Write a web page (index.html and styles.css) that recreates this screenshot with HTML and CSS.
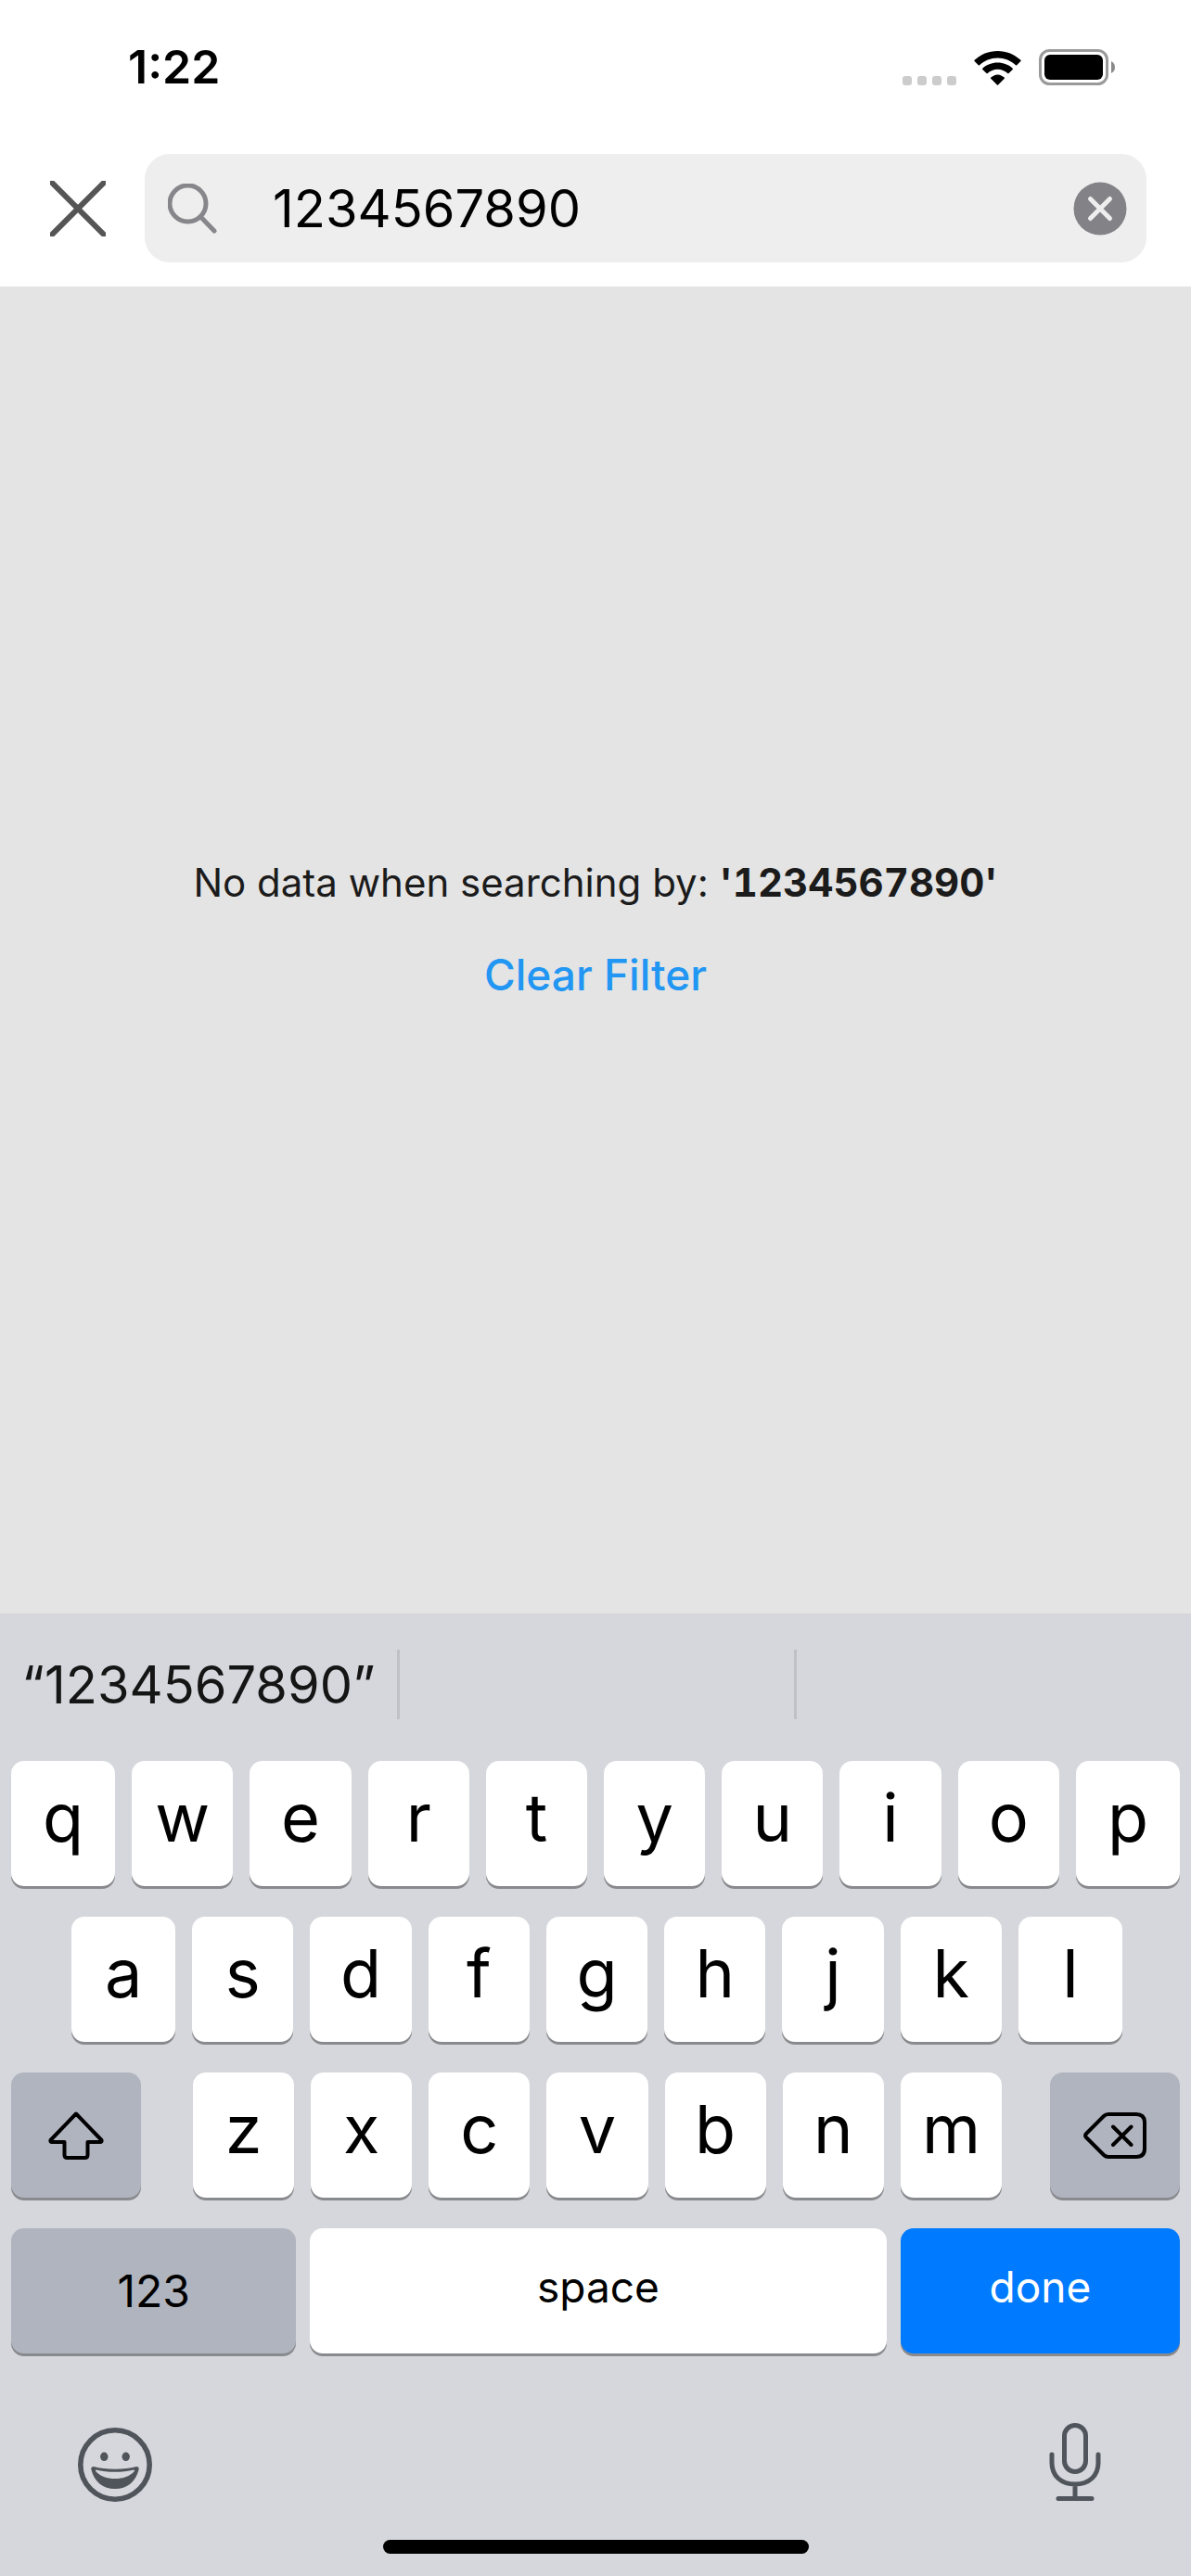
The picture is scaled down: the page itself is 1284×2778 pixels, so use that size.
FILE: index.html
```html
<!DOCTYPE html>
<html lang="en">
<head>
<meta charset="utf-8">
<meta name="viewport" content="width=device-width, initial-scale=1">
<title>Search</title>
<link rel="stylesheet" href="styles.css">
</head>
<body>
<div class="screen">
  <header class="header">
    <div class="status">
      <span class="clock">1:22</span>
      <div class="indicators">
        <svg width="58" height="10" viewBox="0 0 58 10" fill="#ccc" aria-hidden="true"><rect width="10" height="10" rx="3"/><rect x="16" width="10" height="10" rx="3"/><rect x="32" width="10" height="10" rx="3"/><rect x="48" width="10" height="10" rx="3"/></svg>
        <svg width="51" height="37" viewBox="0 0 51 37" aria-hidden="true"><path d="M25.500 7.500C33 7.500 39.800 10.400 45 15.200Q45.600 15.700 46.200 15.200L50.400 11Q51 10.400 50.400 9.800C43.800 3.700 35 0 25.500 0S7.200 3.700.6 9.800Q0 10.400.6 11L4.800 15.200Q5.400 15.700 6 15.200C11.200 10.400 18 7.500 25.500 7.500ZM25.500 19.800C29.700 19.800 33.400 21.400 36.300 24.100Q36.900 24.600 37.500 24.100L41.700 19.900Q42.300 19.300 41.700 18.700C37.400 14.800 31.700 12.500 25.500 12.500S13.600 14.800 9.300 18.700Q8.700 19.300 9.300 19.900L13.500 24.100Q14.100 24.600 14.700 24.100C17.600 21.400 21.300 19.800 25.500 19.800ZM32.800 29.800Q33.400 29.200 32.700 28.600C30.700 26.900 28.200 25.500 25.500 25.500S20.300 26.900 18.300 28.600Q17.600 29.200 18.200 29.800L24.900 36.500Q25.500 37.100 26.100 36.500Z"/></svg>
        <svg width="82" height="39" viewBox="0 0 82 39" aria-hidden="true"><rect x="1.500" y="1.500" width="72" height="36" rx="10" fill="none" stroke="#9a9a9a" stroke-width="3"/><rect x="6" y="6" width="63" height="27" rx="6"/><path d="M78 13Q82 15 82 19.500T78 26Z" fill="#8a8a8a"/></svg>
      </div>
    </div>
    <form class="search-row">
      <button class="icon-button" type="button" aria-label="Close">
        <svg width="60" height="60" viewBox="0 0 60 60" stroke="#555" stroke-width="6" aria-hidden="true"><path d="M0 0 60 60M60 0 0 60"/></svg>
      </button>
      <div class="search-box">
        <svg width="53" height="54" viewBox="0 0 53 54" fill="none" stroke="#87878b" stroke-width="5" stroke-linecap="round" aria-hidden="true"><circle cx="21.500" cy="21.500" r="19.500"/><path d="M36 36.500 50 51"/></svg>
        <input class="search-input" type="text" value="1234567890" aria-label="Search">
        <button class="icon-button" type="button" aria-label="Clear text">
          <svg width="58" height="58" viewBox="0 0 58 58" aria-hidden="true"><circle cx="29" cy="29" r="28.500" fill="#838287"/><path d="M18.500 18.500 39.500 39.500M39.500 18.500 18.500 39.500" stroke="#eee" stroke-width="5" stroke-linecap="round"/></svg>
        </button>
      </div>
    </form>
  </header>

  <main class="empty">
    <p class="empty-text">No data when searching by: <strong>'1234567890'</strong></p>
    <button class="clear-filter" type="button">Clear Filter</button>
  </main>

  <section class="keyboard" aria-label="Keyboard">
    <div class="suggestions">
      <button class="suggestion" type="button">“1234567890”</button>
      <button class="suggestion" type="button" aria-label="Suggestion 2"></button>
      <button class="suggestion" type="button" aria-label="Suggestion 3"></button>
    </div>
    <div class="keys">
      <div class="row">
        <button class="key edge">q</button><button class="key">w</button><button class="key">e</button><button class="key">r</button><button class="key">t</button><button class="key">y</button><button class="key">u</button><button class="key">i</button><button class="key">o</button><button class="key edge">p</button>
      </div>
      <div class="row row-inset">
        <button class="key edge">a</button><button class="key">s</button><button class="key">d</button><button class="key">f</button><button class="key">g</button><button class="key">h</button><button class="key">j</button><button class="key">k</button><button class="key edge">l</button>
      </div>
      <div class="row row-split">
        <button class="key modifier side" aria-label="Shift">
          <svg width="60" height="54" viewBox="0 0 60 54" fill="none" stroke="#000" stroke-width="4" stroke-linejoin="round" aria-hidden="true"><path d="M30 3.500 57.500 32Q58 34 56 34H42.500V48Q42.500 51 39.500 51H20.500Q17.500 51 17.500 48V34H4Q2 34 2.500 32Z"/></svg>
        </button>
        <div class="row letters">
          <button class="key">z</button><button class="key">x</button><button class="key">c</button><button class="key">v</button><button class="key">b</button><button class="key">n</button><button class="key">m</button>
        </div>
        <button class="key modifier side" aria-label="Delete">
          <svg width="68" height="50" viewBox="0 0 68 50" fill="none" stroke="#000" stroke-width="4" stroke-linejoin="round" stroke-linecap="round" aria-hidden="true"><path d="M27 2H57Q66 2 66 11V39Q66 48 57 48H27Q24 48 22 46L3 27Q1 25 3 23L22 4Q24 2 27 2ZM32 15.500 51.500 35M51.500 15.500 32 35"/></svg>
        </button>
      </div>
      <div class="row row-bottom">
        <button class="key modifier numbers">123</button>
        <button class="key word space">space</button>
        <button class="key word done">done</button>
      </div>
    </div>
    <div class="dock">
      <button class="icon-button" type="button" aria-label="Emoji">
        <svg width="80" height="80" viewBox="0 0 80 80" aria-hidden="true"><circle cx="40" cy="40" r="37.200" fill="none" stroke="#50555b" stroke-width="5.600"/><ellipse cx="28.300" cy="31.300" rx="4.200" ry="4.800" fill="#50555b"/><ellipse cx="51.700" cy="31.300" rx="4.200" ry="4.800" fill="#50555b"/><path d="M17 42C30 45.500 50 45.500 63 42Q66 42 65.700 45C62 59 53 66 40 66S18 59 14.300 45Q14 42 17 42Z" fill="#50555b"/><path d="M19.800 45.500C32 48.600 48 48.600 60.200 45.500Q61.500 45.500 60.800 47C56 52.500 49 55 40 55S24 52.500 19.200 47Q18.500 45.500 19.800 45.500Z" fill="#d6d7dc"/></svg>
      </button>
      <button class="icon-button" type="button" aria-label="Dictation">
        <svg width="56" height="86" viewBox="0 0 56 86" fill="none" stroke="#50555b" stroke-width="5" stroke-linecap="round" aria-hidden="true"><rect x="16.500" y="3.500" width="23" height="50" rx="11.500"/><path d="M3 35V44C3 58 13 67 28 67S53 58 53 44V35M28 67V82M10 82.500H46"/></svg>
      </button>
    </div>
    <div class="home-indicator"></div>
  </section>
</div>
</body>
</html>
```
FILE: styles.css
```css
* {
  box-sizing: border-box;
}

body {
  margin: 0;
  font-family: Inter, "Liberation Sans", sans-serif;
  color: #000;
}

button,
input {
  margin: 0;
  padding: 0;
  border: 0;
  background: none;
  font: inherit;
  color: inherit;
}

svg {
  display: block;
}

.screen {
  display: flex;
  flex-direction: column;
  min-height: 100vh;
  background: #e4e4e4;
}

.header {
  padding-bottom: 26px;
  background: #fff;
}

.status {
  display: flex;
  justify-content: space-between;
  align-items: center;
  height: 144px;
  padding: 0 82px 0 138px;
}

.clock {
  font-size: 50px;
  font-weight: 600;
  line-height: 60px;
}

.indicators {
  display: flex;
  align-items: flex-end;
  gap: 19px;
}

.search-row {
  display: grid;
  grid-template-columns: 60px minmax(0, 1fr);
  align-items: center;
  gap: 42px;
  padding: 22px 48px 0 54px;
}

.icon-button {
  flex: none;
}

.search-box {
  display: flex;
  align-items: center;
  height: 117px;
  padding: 0 21px 0 25px;
  border-radius: 27px;
  background: #eee;
}

.search-input {
  flex: 1;
  min-width: 0;
  padding-left: 60px;
  outline: 0;
  font-size: 56px;
  line-height: 68px;
}

.empty {
  display: flex;
  flex: 1;
  flex-direction: column;
  align-items: center;
  justify-content: center;
  padding-bottom: 4px;
}

.empty-text {
  margin: 0;
  font-size: 42px;
  line-height: 56px;
  color: #1b1b1b;
}

.empty-text strong {
  font-weight: 700;
  font-variant-numeric: tabular-nums;
}

.clear-filter {
  height: 142px;
  font-size: 46px;
  font-weight: 500;
  color: #2196f3;
}

.keyboard {
  padding-bottom: 24px;
  background: #d6d7dc;
}

.suggestions {
  display: grid;
  grid-template-columns: repeat(3, 1fr);
  padding-top: 39px;
}

.suggestion {
  height: 75px;
  font-size: 56px;
  line-height: 68px;
  color: #151515;
}

.suggestion + .suggestion {
  border-left: 3px solid #c0c1c6;
}

.keys {
  display: flex;
  flex-direction: column;
  gap: 33px;
  padding: 45px 12px 0;
}

.row {
  display: flex;
  gap: 18px;
}

.row-inset {
  padding: 0 62px 0 65px;
}

.row-split {
  gap: 52px;
}

.row-bottom {
  gap: 15px;
}

.letters {
  flex: 1;
  padding-left: 4px;
}

.key {
  display: flex;
  flex: 109 1 0;
  align-items: center;
  justify-content: center;
  height: 135px;
  padding-bottom: 14px;
  border-radius: 14px;
  background: #fff;
  box-shadow: 0 3px 0 #898a8e;
  font-size: 72px;
  font-weight: 400;
}

.edge {
  flex-grow: 112;
}

.modifier {
  padding-bottom: 0;
  background: #b0b4bf;
}

.side {
  flex: 0 0 140px;
}

.word {
  padding-bottom: 10px;
  font-size: 46px;
}

.numbers {
  flex-grow: 307;
  font-size: 48px;
}

.space {
  flex-grow: 621;
}

.done {
  flex-grow: 301;
  background: #007aff;
  color: #fff;
}

.dock {
  display: flex;
  justify-content: space-between;
  align-items: flex-end;
  padding: 74px 97px 0 84px;
}

.home-indicator {
  width: 459px;
  max-width: 60%;
  height: 15px;
  margin: 41px auto 0;
  border-radius: 8px;
  background: #000;
}
```
